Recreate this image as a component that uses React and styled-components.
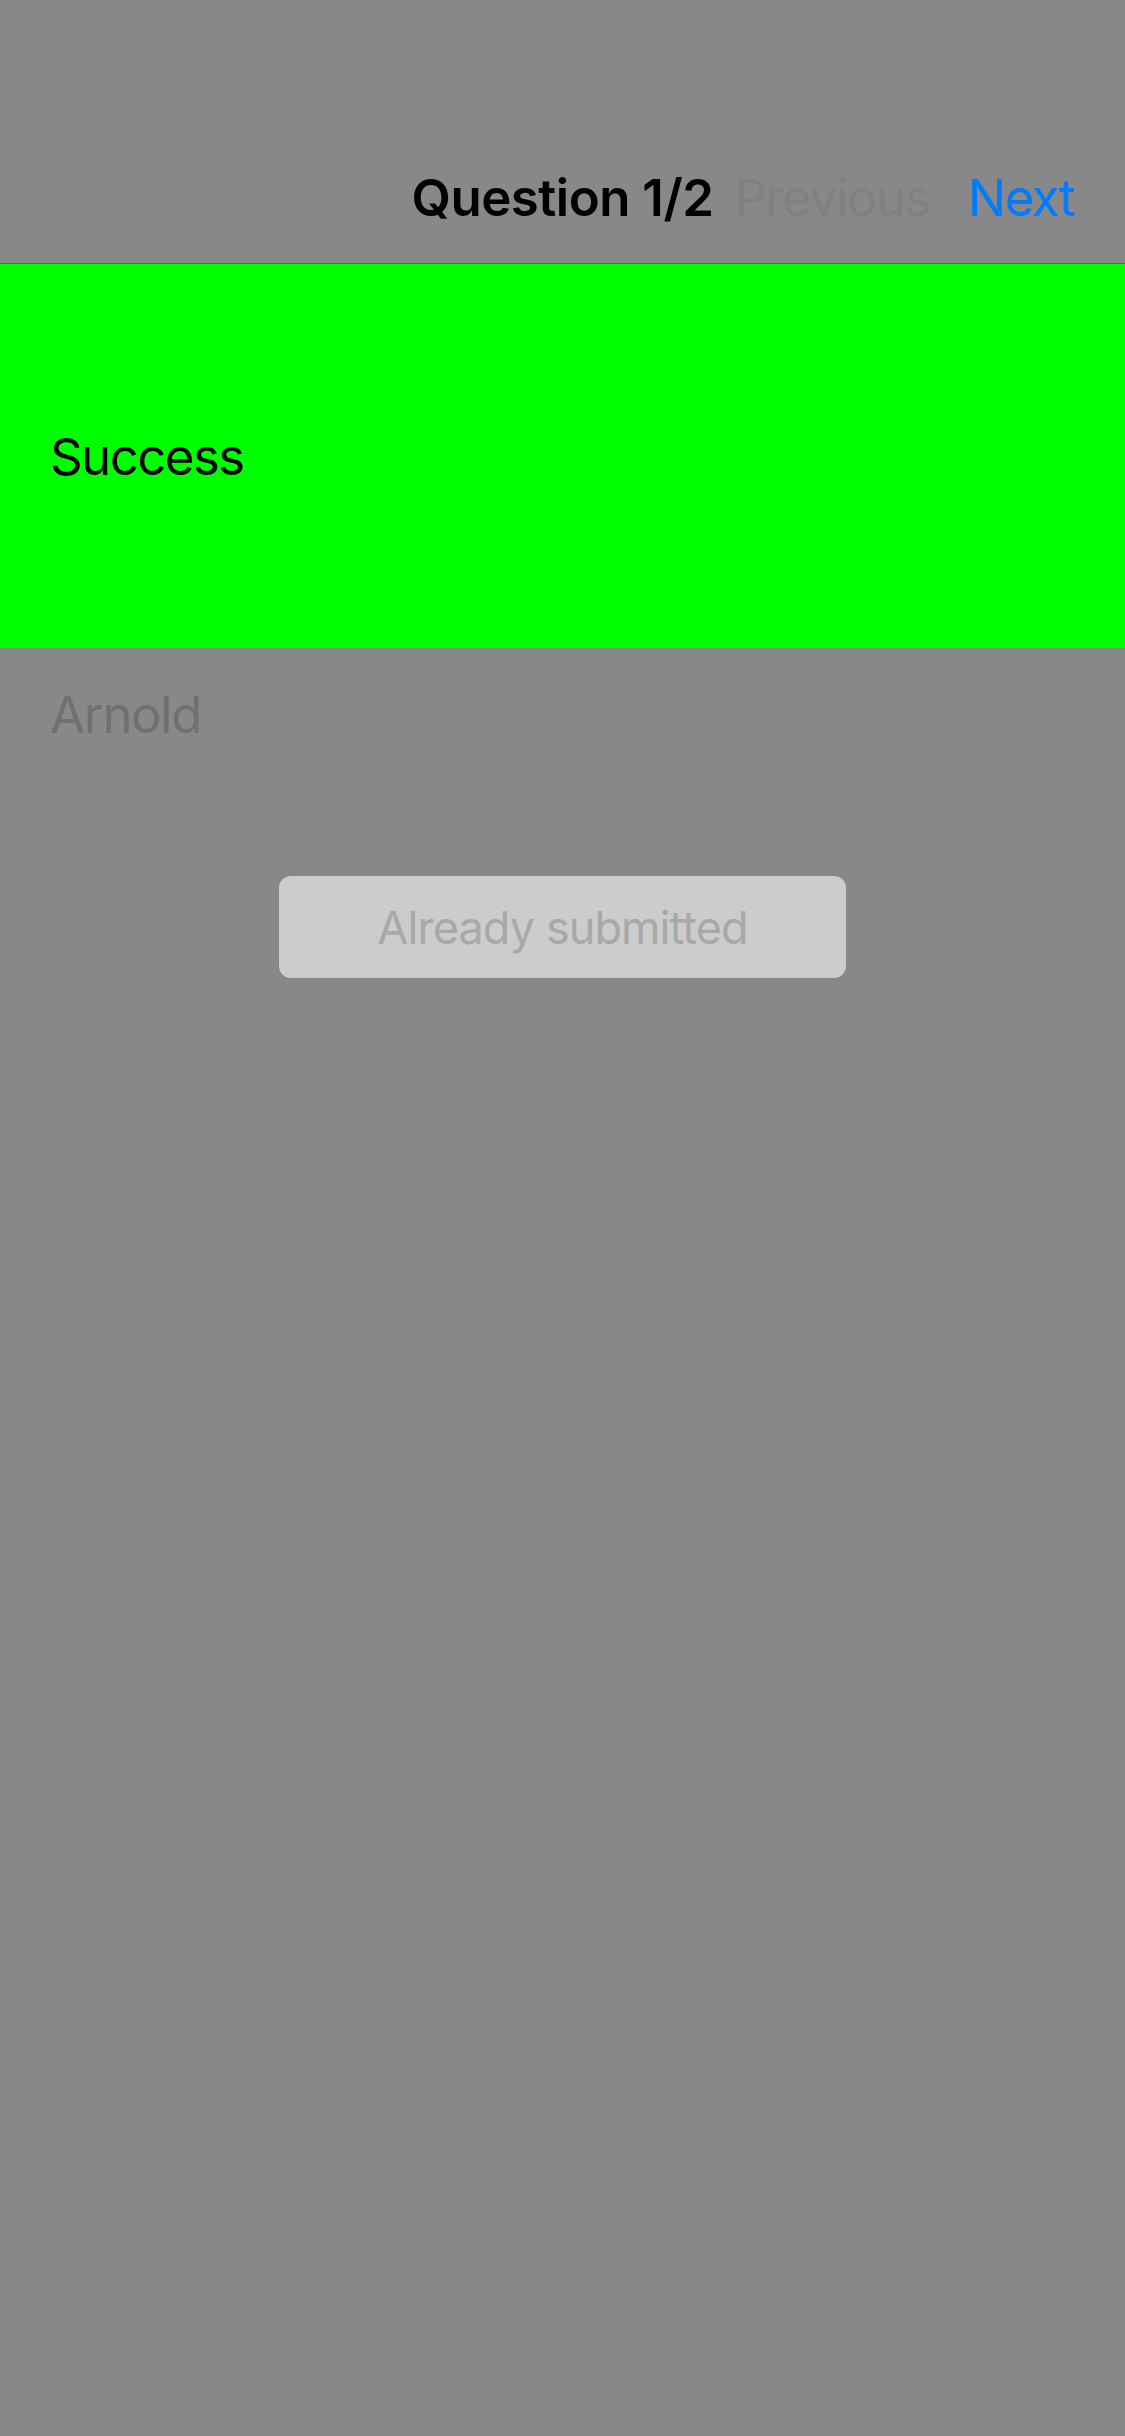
import React from 'react';
import styled, { createGlobalStyle } from 'styled-components';

const GlobalStyle = createGlobalStyle`
    html, body {
        margin: 0;
        padding: 0;
        background-color: #888888;
    }
    body {
        font-family: Inter, "Noto Sans", "Liberation Sans", sans-serif;
        -webkit-font-smoothing: antialiased;
    }
`;

const StyledQuestionPage = styled.div`
    min-height: 100vh;
    background-color: #888888;
`;

const NavBar = styled.header`
    height: 264px;
    box-sizing: border-box;
    padding-top: 132px;
    border-bottom: 1px solid rgba(0, 0, 0, 0.3);
    display: grid;
    grid-template-columns: 1fr auto 1fr;
    align-items: center;
`;

const NavTitle = styled.h1`
    grid-column: 2;
    margin: 0;
    font-size: 51px;
    font-weight: 600;
    letter-spacing: -0.5px;
    color: #000;
`;

const NavActions = styled.div`
    grid-column: 3;
    display: flex;
    justify-content: flex-end;
    align-items: center;
    gap: 38px;
    padding-right: 51px;
`;

const NavButton = styled.button`
    border: none;
    background: none;
    padding: 0;
    font-family: inherit;
    font-size: 51px;
    font-weight: 400;
    letter-spacing: -1.6px;
    color: ${(props) => (props.disabled ? '#808080' : '#007aff')};
    cursor: ${(props) => (props.disabled ? 'default' : 'pointer')};
`;

const Banner = styled.div`
    height: 384px;
    background-color: ${(props) => (props.success ? '#00ff00' : '#ff3b30')};
    display: flex;
    align-items: center;
    padding-left: 50px;
    font-size: 51px;
    letter-spacing: -1.6px;
    color: #000;
`;

const Answer = styled.div`
    margin-top: 41px;
    padding-left: 50px;
    font-size: 51px;
    line-height: 1;
    letter-spacing: -1.4px;
    color: #707070;
`;

const Actions = styled.div`
    display: flex;
    justify-content: center;
    margin-top: 136px;
`;

const SubmitButton = styled.button`
    width: 567px;
    height: 102px;
    border: none;
    border-radius: 12px;
    background-color: #cccccc;
    font-family: inherit;
    font-size: 45px;
    letter-spacing: -0.9px;
    color: #a8a8a8;
`;

const App = () => {
    const question = { index: 1, total: 2, answer: 'Arnold', submitted: true };
    return (
        <StyledQuestionPage>
            <GlobalStyle />
            <NavBar>
                <NavTitle>Question {question.index}/{question.total}</NavTitle>
                <NavActions>
                    <NavButton disabled>Previous</NavButton>
                    <NavButton>Next</NavButton>
                </NavActions>
            </NavBar>
            <Banner success>Success</Banner>
            <Answer>{question.answer}</Answer>
            <Actions>
                <SubmitButton disabled={question.submitted}>
                    {question.submitted ? 'Already submitted' : 'Submit'}
                </SubmitButton>
            </Actions>
        </StyledQuestionPage>
    );
};

export default App;
